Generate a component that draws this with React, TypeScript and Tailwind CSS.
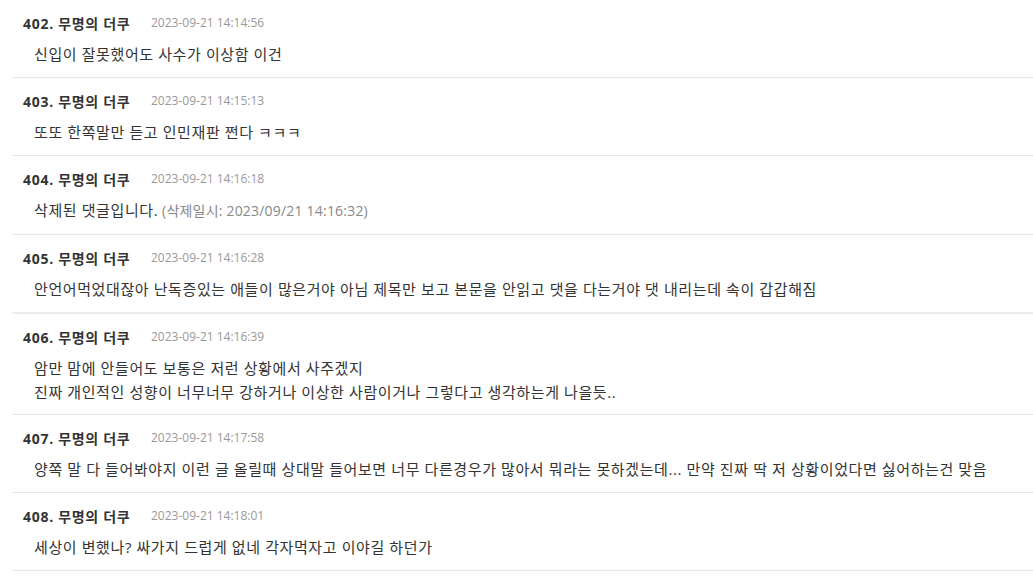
import React from 'react';

type Comment = {
  no: number;
  date: string;
  lines: string[];
  deletedAt?: string;
  thick?: boolean;
};

const comments: Comment[] = [
  { no: 402, date: '2023-09-21 14:14:56', lines: ['신입이 잘못했어도 사수가 이상함 이건'] },
  { no: 403, date: '2023-09-21 14:15:13', lines: ['또또 한쪽말만 듣고 인민재판 쩐다 ㅋㅋㅋ'] },
  { no: 404, date: '2023-09-21 14:16:18', lines: ['삭제된 댓글입니다.'], deletedAt: '(삭제일시: 2023/09/21 14:16:32)' },
  {
    no: 405,
    date: '2023-09-21 14:16:28',
    lines: ['안언어먹었대잖아 난독증있는 애들이 많은거야 아님 제목만 보고 본문을 안읽고 댓을 다는거야 댓 내리는데 속이 갑갑해짐'],
    thick: true,
  },
  {
    no: 406,
    date: '2023-09-21 14:16:39',
    lines: [
      '암만 맘에 안들어도 보통은 저런 상황에서 사주겠지',
      '진짜 개인적인 성향이 너무너무 강하거나 이상한 사람이거나 그렇다고 생각하는게 나을듯..',
    ],
  },
  {
    no: 407,
    date: '2023-09-21 14:17:58',
    lines: ['양쪽 말 다 들어봐야지 이런 글 올릴때 상대말 들어보면 너무 다른경우가 많아서 뭐라는 못하겠는데... 만약 진짜 딱 저 상황이었다면 싫어하는건 맞음'],
  },
  { no: 408, date: '2023-09-21 14:18:01', lines: ['세상이 변했나? 싸가지 드럽게 없네 각자먹자고 이야길 하던가'] },
];

export default function App() {
  return (
    <div
      className="min-h-screen bg-white pl-3"
      style={{ fontFamily: '"Open Sans", "Noto Sans CJK KR", sans-serif' }}
    >
      {comments.map(c => (
        <div
          key={c.no}
          className={`pt-[13px] ${c.lines.length > 1 ? 'pb-[10px]' : 'pb-[11px]'} ${c.thick ? 'border-b-2 border-[#ececec]' : 'border-b border-[#e6e6e6]'}`}
        >
          <div className="flex items-center h-5 pl-[11px]">
            <span className="text-[14px] font-bold tracking-[0.7px] text-[#333] w-[128px]">
              {c.no}. 무명의 더쿠
            </span>
            <span className="text-[12px] text-[#999]">{c.date}</span>
          </div>
          <div className="mt-[9px] pl-[22px] text-[15px] tracking-[0.6px] leading-6 text-[#333]">
            {c.lines.map((l, i) => (
              <div key={i}>
                {l}
                {c.deletedAt && (
                  <span className="text-[14px] tracking-[0.2px] text-[#888]"> {c.deletedAt}</span>
                )}
              </div>
            ))}
          </div>
        </div>
      ))}
    </div>
  );
}
